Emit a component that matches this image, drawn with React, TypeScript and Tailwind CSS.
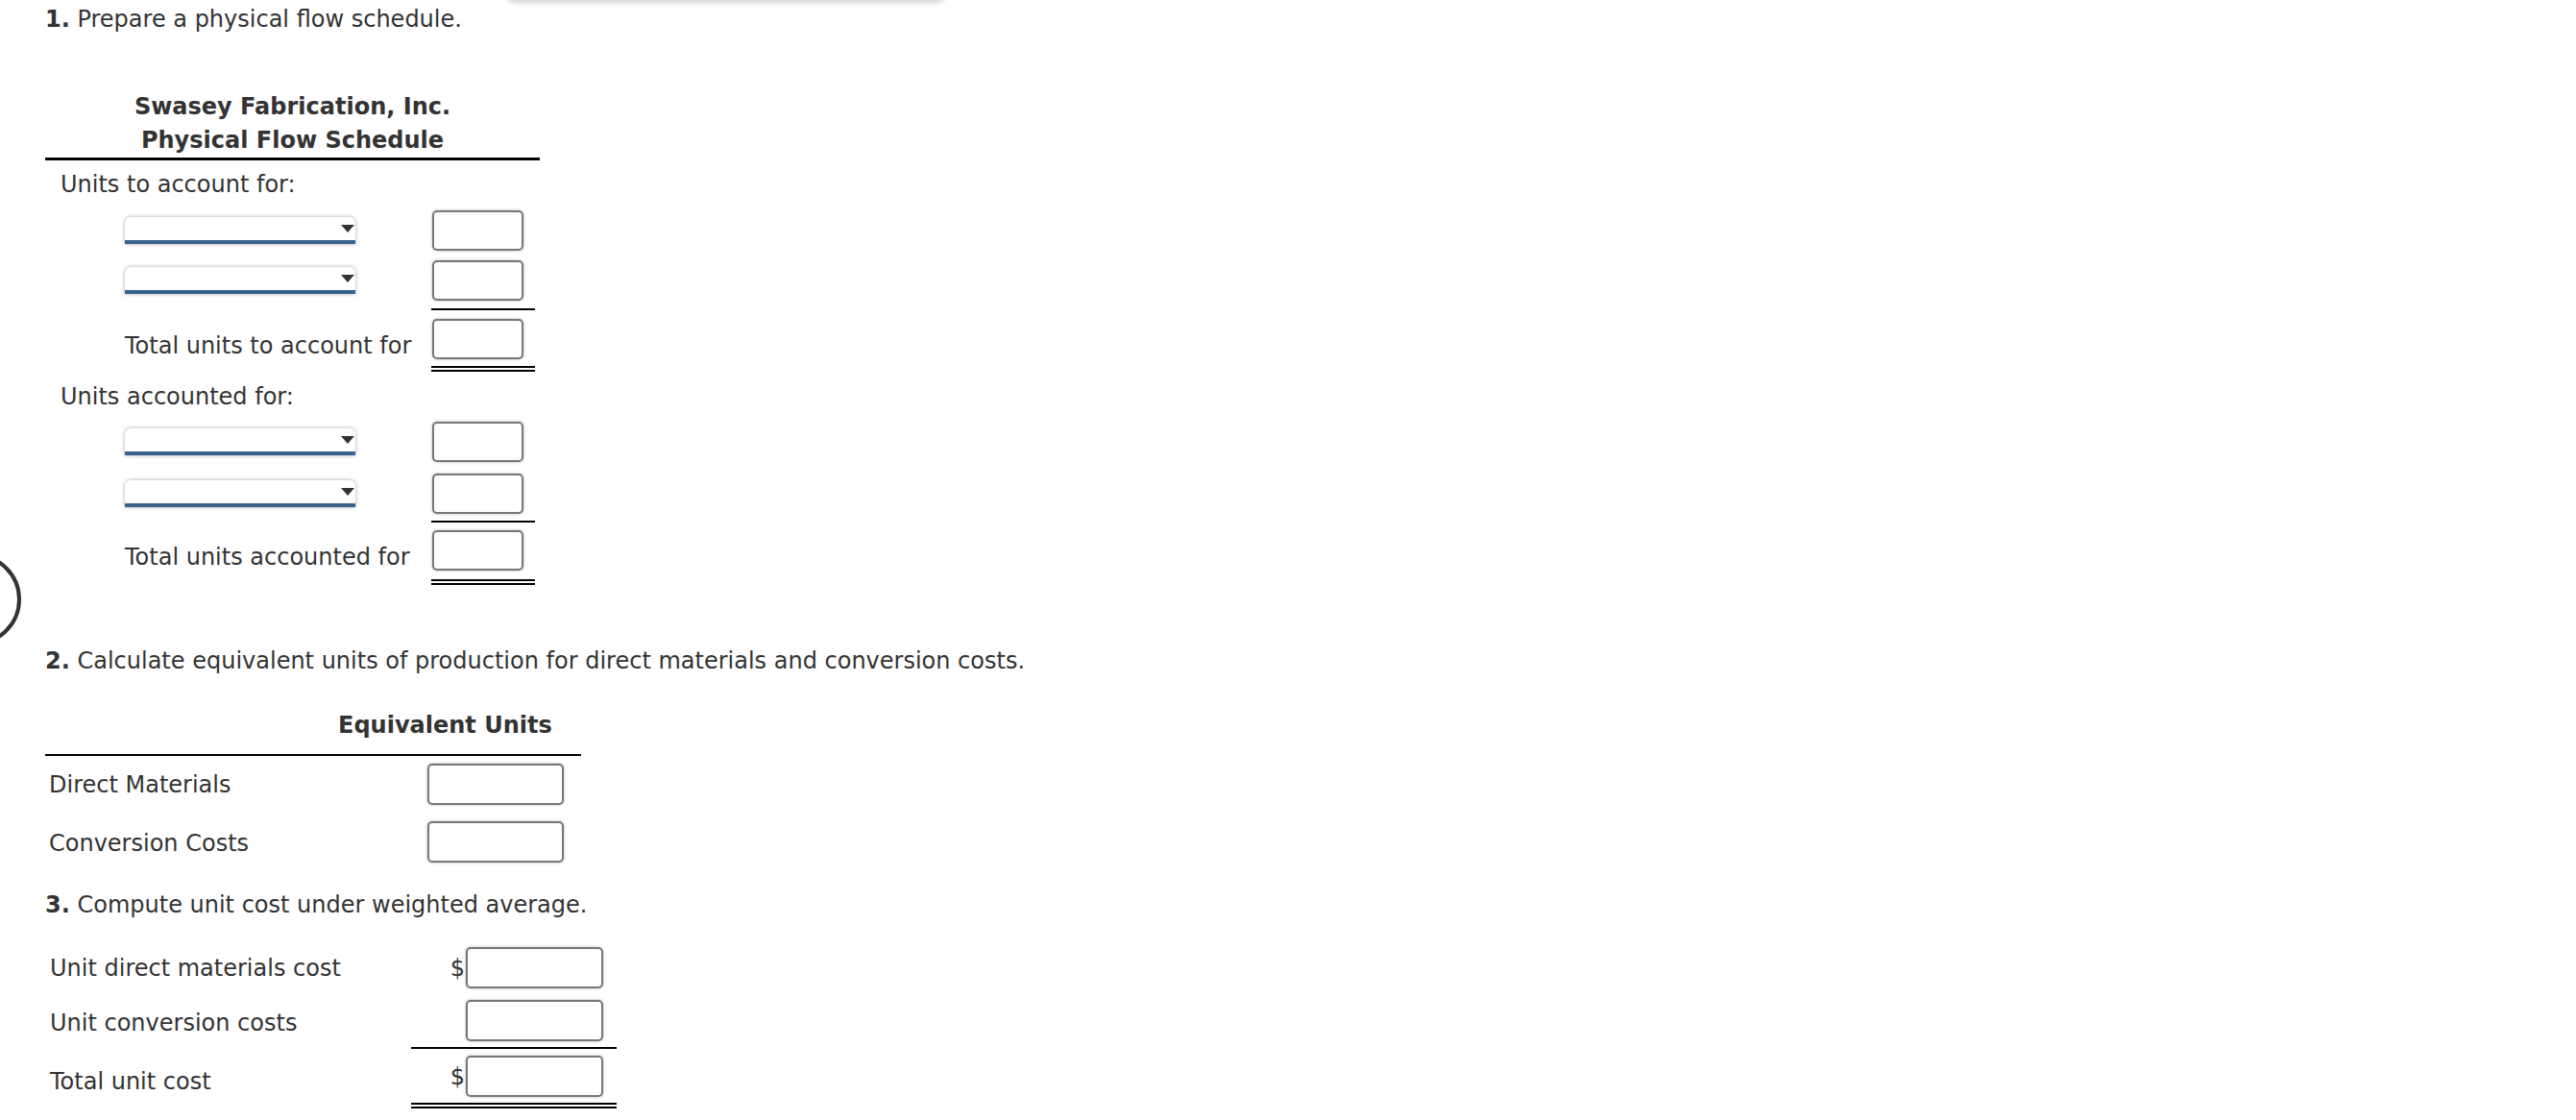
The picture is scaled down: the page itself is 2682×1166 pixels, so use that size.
import React from "react";

function Field({ className }: { className: string }) {
  return (
    <input
      type="text"
      aria-label="answer"
      className={`block shrink-0 rounded-[5px] border-2 border-[#787878] bg-white shadow-[0_0_3px_rgba(0,0,0,0.3)] outline-none ${className}`}
    />
  );
}

function Dropdown() {
  return (
    <div className="relative h-[28px] w-[240px] rounded-t-[6px] border-b-4 border-[#37628e] bg-white shadow-[0_0_4px_rgba(0,0,0,0.35)]">
      <svg
        className="absolute right-[1px] top-[8px]"
        width="14"
        height="8"
        viewBox="0 0 14 8"
      >
        <path d="M0 0 H14 L7 8 Z" fill="#333" />
      </svg>
    </div>
  );
}

function FlowRow({ children, offset }: { children: React.ReactNode; offset: string }) {
  return (
    <div className={`flex h-[42px] items-center ${offset}`}>
      <div className="flex w-[319px] items-center">{children}</div>
      <div className="w-[108px] pl-[1px]">
        <Field className="h-[42px] w-[95px]" />
      </div>
    </div>
  );
}

function CostRow({
  label,
  dollar,
  offset,
  labelPad,
}: {
  label: string;
  dollar: boolean;
  offset: string;
  labelPad: string;
}) {
  return (
    <div className={`flex h-[43px] items-center ${offset}`}>
      <div className={`w-[381px] pl-[5px] ${labelPad}`}>{label}</div>
      <div className="flex w-[214px] items-center justify-end pr-[14px]">
        {dollar && <span className="mr-[1px]">$</span>}
        <Field className="h-[43px] w-[143px]" />
      </div>
    </div>
  );
}

export default function App() {
  return (
    <div className="relative min-h-[1166px] w-full overflow-hidden bg-white font-['DejaVu_Sans',Verdana,sans-serif] text-[24px] leading-[28px] text-[#333]">
      <div className="absolute left-[527px] top-[-40px] h-[40px] w-[456px] rounded-[8px] bg-white shadow-[0_2px_6px_rgba(0,0,0,0.22)]" />
      <div className="absolute left-[-74px] top-[576px] h-[96px] w-[96px] rounded-full border-4 border-[#333]" />

      <div className="pl-[47px] pt-[6px]">
        {/* Part 1 */}
        <p className="h-[29px]">
          <b>1.</b> Prepare a physical flow schedule.
        </p>

        <div className="mt-[59px] w-[515px] border-b-[3px] border-black text-center font-bold leading-[35px]">
          <div>Swasey Fabrication, Inc.</div>
          <div>Physical Flow Schedule</div>
        </div>

        <p className="mt-[11px] pl-[16px]">Units to account for:</p>

        <div className="ml-[83px]">
          <FlowRow offset="mt-[13px]">
            <Dropdown />
          </FlowRow>
          <FlowRow offset="mt-[10px]">
            <Dropdown />
          </FlowRow>
          <div className="ml-[319px] mt-[8px] h-[2px] w-[108px] bg-black" />
          <FlowRow offset="mt-[9px]">
            <span className="pt-[14px]">Total units to account for</span>
          </FlowRow>
          <div className="ml-[319px] mt-[7px] h-[6px] w-[108px] border-y-2 border-black" />
        </div>

        <p className="mt-[12px] pl-[16px]">Units accounted for:</p>

        <div className="ml-[83px]">
          <FlowRow offset="mt-[12px]">
            <Dropdown />
          </FlowRow>
          <FlowRow offset="mt-[12px]">
            <Dropdown />
          </FlowRow>
          <div className="ml-[319px] mt-[7px] h-[2px] w-[108px] bg-black" />
          <FlowRow offset="mt-[8px]">
            <span className="pt-[13px]">Total units accounted for</span>
          </FlowRow>
          <div className="ml-[319px] mt-[9px] h-[6px] w-[108px] border-y-2 border-black" />
        </div>

        {/* Part 2 */}
        <p className="mt-[65px]">
          <b>2.</b> Calculate equivalent units of production for direct materials and conversion costs.
        </p>
        <p className="mt-[39px] pl-[305px] font-bold">Equivalent Units</p>
        <div className="mt-[16px] h-[2px] w-[558px] bg-black" />
        <div className="mt-[8px] flex h-[43px] items-center">
          <div className="w-[398px] pl-[4px]">Direct Materials</div>
          <Field className="h-[43px] w-[142px]" />
        </div>
        <div className="mt-[17px] flex h-[43px] items-center">
          <div className="w-[398px] pl-[4px] pt-[2px]">Conversion Costs</div>
          <Field className="h-[43px] w-[142px]" />
        </div>

        {/* Part 3 */}
        <p className="mt-[30px]">
          <b>3.</b> Compute unit cost under weighted average.
        </p>
        <CostRow label="Unit direct materials cost" dollar offset="mt-[30px]" labelPad="pt-[0px]" />
        <CostRow label="Unit conversion costs" dollar={false} offset="mt-[12px]" labelPad="pt-[4px]" />
        <div className="ml-[381px] mt-[6px] h-[2px] w-[214px] bg-black" />
        <CostRow label="Total unit cost" dollar offset="mt-[7px]" labelPad="pt-[10px]" />
        <div className="ml-[381px] mt-[6px] h-[6px] w-[214px] border-y-2 border-black" />
      </div>
    </div>
  );
}
